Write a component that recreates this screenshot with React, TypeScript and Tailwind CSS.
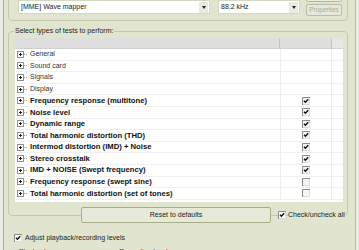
import React from 'react';

type TestRow = { label: string; bold: boolean; checked?: boolean };

const tests: TestRow[] = [
  { label: 'General', bold: false },
  { label: 'Sound card', bold: false },
  { label: 'Signals', bold: false },
  { label: 'Display', bold: false },
  { label: 'Frequency response (multitone)', bold: true, checked: true },
  { label: 'Noise level', bold: true, checked: true },
  { label: 'Dynamic range', bold: true, checked: true },
  { label: 'Total harmonic distortion (THD)', bold: true, checked: true },
  { label: 'Intermod distortion (IMD) + Noise', bold: true, checked: true },
  { label: 'Stereo crosstalk', bold: true, checked: true },
  { label: 'IMD + NOISE (Swept frequency)', bold: true, checked: true },
  { label: 'Frequency response (swept sine)', bold: true, checked: false },
  { label: 'Total harmonic distortion (set of tones)', bold: true, checked: false },
];

function ExpandBox() {
  return (
    <svg width="12" height="7" viewBox="0 0 12 7" className="shrink-0">
      <rect x="0.5" y="0.5" width="6" height="6" fill="#ffffff" stroke="#8e8f8f" />
      <path d="M2 3.5H5M3.5 2V5" stroke="#222" strokeWidth="1" />
      <path d="M7 3.5H11" stroke="#a0a0a0" strokeWidth="1" strokeDasharray="1 1" />
    </svg>
  );
}

function CheckBox({ checked, light }: { checked: boolean; light?: boolean }) {
  return (
    <svg width="8" height="8" viewBox="0 0 8 8" className="shrink-0">
      <rect x="0" y="0" width="8" height="8" fill={light ? '#f4f4f4' : '#ffffff'} />
      <path d="M0.5 8V0.5H8" stroke="#8a8a8a" fill="none" />
      <path d="M7.5 1V7.5H1" stroke="#dcdcdc" fill="none" />
      {checked && <path d="M2 3.8L3.4 5.3L6.2 2.2" stroke="#111" strokeWidth="1.4" fill="none" />}
    </svg>
  );
}

function Combo({ text, width }: { text: string; width: string }) {
  return (
    <div className={`${width} h-[14px] bg-white border border-[#d3d8c0] flex items-center`}>
      <span className="flex-1 pl-[2px] text-[7px] text-[#222]">{text}</span>
      <div className="w-[9px] h-[11px] mr-[1px] bg-[#e9ebe0] flex items-center justify-center">
        <svg width="4" height="3" viewBox="0 0 4 3">
          <path d="M0 0H4L2 3Z" fill="#222" />
        </svg>
      </div>
    </div>
  );
}

export default function App() {
  return (
    <div
      className="w-[359px] h-[250px] overflow-hidden flex bg-[#e1e5cf] text-[#1c1c1c]"
      style={{ fontFamily: '"Liberation Sans", Arial, sans-serif' }}
    >
      {/* left window edge */}
      <div className="w-[4px] h-full bg-[#ebebe6] border-r border-[#a9ad9a]" />

      <div className="w-[351px] h-full pl-[4px] flex flex-col">
        {/* device group (top part cut off) */}
        <div className="-mt-[30px] w-[340px] h-[51px] shrink-0 rounded-[4px] border border-[#c3c9a8] pt-[29px] pl-[9px] flex">
          <Combo text="[MME] Wave mapper" width="w-[192px]" />
          <div className="ml-[8px]">
            <Combo text="88.2 kHz" width="w-[82px]" />
          </div>
          <div className="ml-[6px] -mt-[14px] flex flex-col gap-[2px]">
            <div className="w-[36px] h-[16px] rounded-[2px] border border-[#b3ba98] bg-[#eaede0]" />
            <div className="w-[36px] h-[12px] rounded-[2px] border border-[#b8bea2] bg-[#e6e9d9] flex items-center justify-center text-[6.5px] text-[#a6ab98]">
              Properties
            </div>
          </div>
        </div>

        {/* tests group */}
        <fieldset className="mt-[6px] w-[340px] rounded-[4px] border border-[#c3c9a8] pl-[6px] pr-[3px] pb-[13px]">
          <legend className="-ml-[1px] px-[1px] text-[7px] leading-[8px] text-[#222]">
            Select types of tests to perform:
          </legend>
          <div className="mt-[3px] w-[328px] h-[164px] bg-white">
            <div className="h-[11px] flex bg-[#dedede] border-b border-[#d0d0d0]">
              <div className="w-[265px] border-r border-[#c4c4c4]" />
              <div className="w-[52px] border-r border-[#c4c4c4]" />
              <div className="flex-1 bg-[#e6e6e6]" />
            </div>
            {tests.map((t) => (
              <div key={t.label} className="h-[11.6px] flex border-b border-[#f0f0f0]">
                <div className="w-[265px] pl-[2px] flex items-center overflow-hidden whitespace-nowrap">
                  <ExpandBox />
                  <span
                    className={
                      t.bold
                        ? 'ml-[1px] text-[7.7px] font-bold text-[#111]'
                        : 'ml-[1px] text-[7px] text-[#333]'
                    }
                  >
                    {t.label}
                  </span>
                </div>
                <div className="w-[52px] border-l border-r border-[#ececec] flex items-center justify-center">
                  {t.checked !== undefined && <CheckBox checked={t.checked} light />}
                </div>
                <div className="flex-1" />
              </div>
            ))}
          </div>
        </fieldset>

        {/* reset + check all row, sitting on the group's bottom edge */}
        <div className="-mt-[9px] h-[16px] flex items-center">
          <div className="ml-[73px] w-[190px] h-[16px] rounded-[2px] border border-[#a7ae8b] bg-[#e6e9d8] flex items-center justify-center text-[7px] text-[#222]">
            Reset to defaults
          </div>
          <div className="ml-[7px]">
            <CheckBox checked />
          </div>
          <span className="ml-[2px] pr-[1px] bg-[#e1e5cf] text-[7px] text-[#222]">Check/uncheck all</span>
        </div>

        <div className="mt-[10px] h-[10px] flex items-center">
          <div className="ml-[6px]">
            <CheckBox checked />
          </div>
          <span className="ml-[3px] text-[7px] text-[#222]">Adjust playback/recording levels</span>
        </div>

        <div className="mt-[5px] flex text-[7px] leading-[8px] text-[#444]">
          <span className="ml-[11px]">Playback:</span>
          <span className="ml-[70px]">Recording level:</span>
        </div>
      </div>

      {/* right window edge */}
      <div className="w-[4px] h-full bg-[#e9ebe2] border-l border-[#b9bea7]" />
    </div>
  );
}
